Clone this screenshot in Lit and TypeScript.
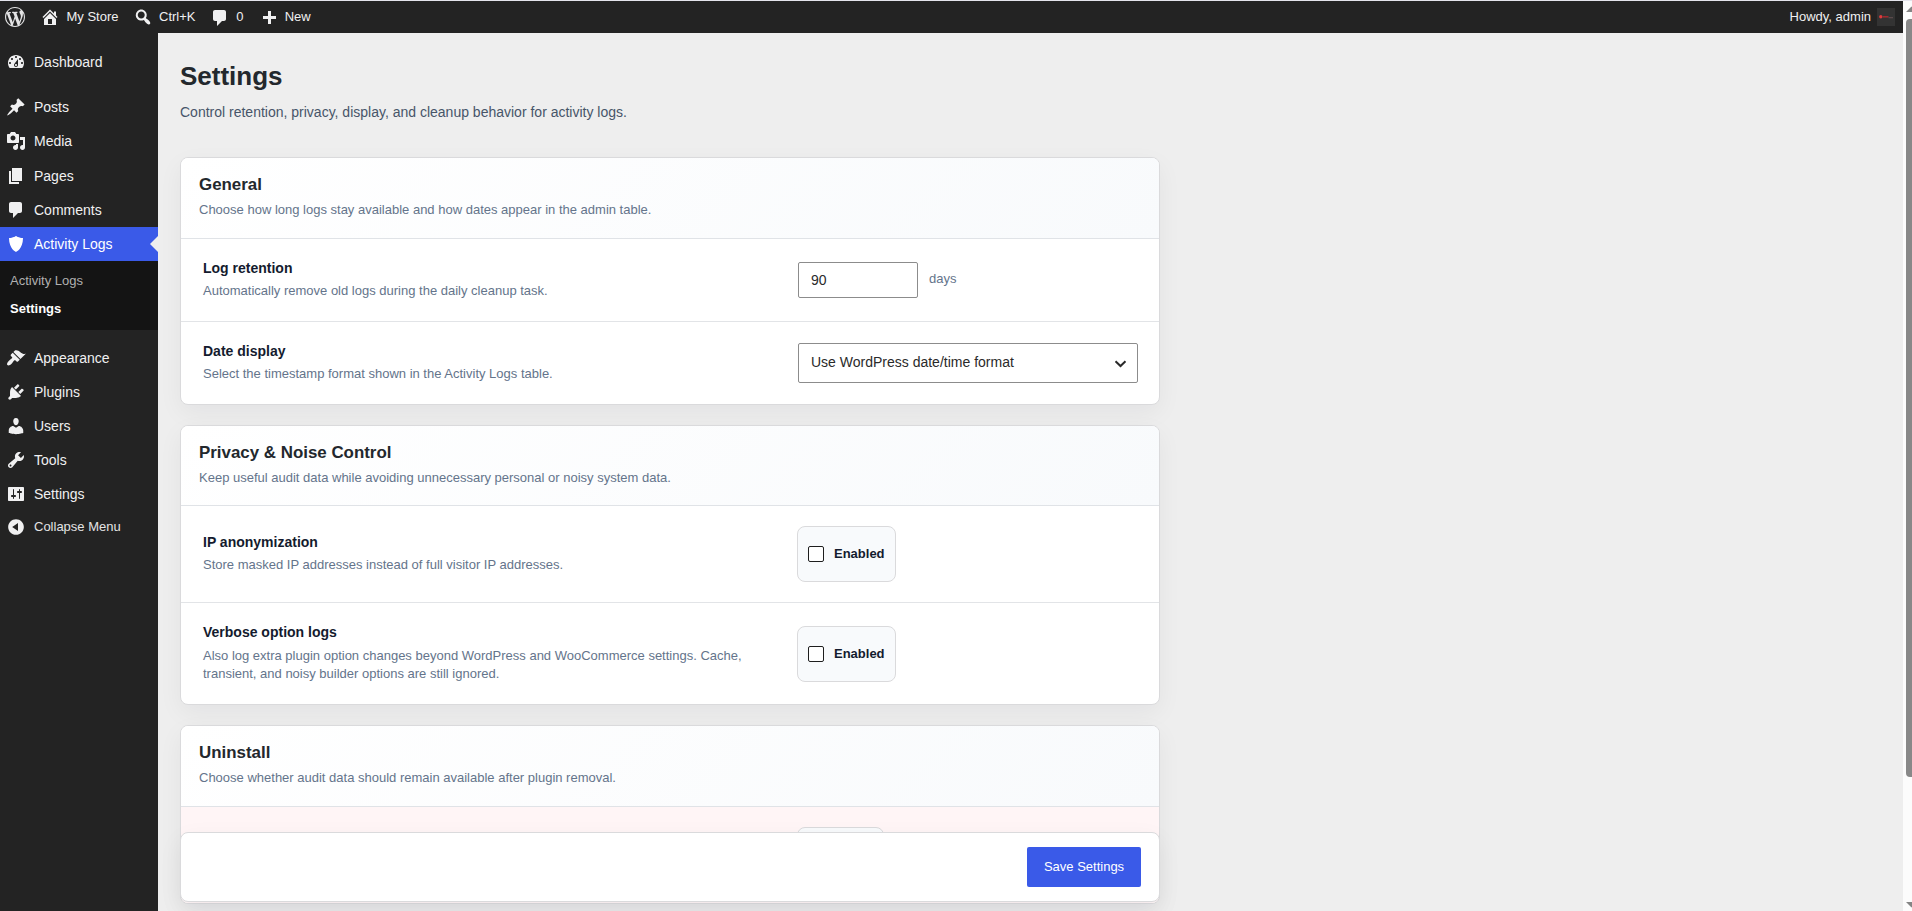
import { LitElement, html, svg, css, nothing } from "lit";
import { customElement, property } from "lit/decorators.js";

const ICONS: Record<string, string> = {
  wordpress:
    "M20 10c0-5.51-4.49-10-10-10C4.48 0 0 4.49 0 10c0 5.52 4.48 10 10 10 5.51 0 10-4.48 10-10zM7.78 15.37L4.37 6.22c.55-.02 1.17-.08 1.17-.08.5-.06.44-1.13-.06-1.11 0 0-1.45.11-2.37.11-.18 0-.37 0-.58-.01C4.12 2.69 6.87 1.11 10 1.11c2.33 0 4.45.87 6.05 2.34-.68-.11-1.65.39-1.65 1.58 0 .74.45 1.36.9 2.1.35.61.55 1.36.55 2.46 0 1.49-1.4 5-1.4 5l-3.03-8.37c.54-.02.82-.17.82-.17.5-.05.44-1.25-.06-1.22 0 0-1.44.12-2.38.12-.87 0-2.33-.12-2.33-.12-.5-.03-.56 1.2-.06 1.22l.92.08 1.26 3.41zM17.41 10c.24-.64.74-1.87.43-4.25.7 1.29 1.05 2.71 1.05 4.25 0 3.29-1.73 6.24-4.4 7.78.97-2.59 1.94-5.2 2.92-7.78zM6.1 18.09C3.12 16.65 1.11 13.53 1.11 10c0-1.3.23-2.48.72-3.59C3.25 10.3 4.67 14.2 6.1 18.09zm4.03-6.63l2.58 6.98c-.86.29-1.76.45-2.71.45-.79 0-1.57-.11-2.29-.33.81-2.38 1.62-4.74 2.42-7.1z",
  home: "M16 8.5l1.53 1.53-1.06 1.06L10 4.6l-6.47 6.49-1.06-1.06L10 2.5l4 4v-2h2v4zm-6-2.46l6 5.99V18H4v-5.97zM12 17v-5H8v5h4z",
  search:
    "M12.14 4.18c1.87 1.87 2.11 4.75.72 6.89.12.1.22.21.36.31.2.16.47.36.81.59.34.24.56.39.66.47.42.31.73.57.94.78.32.32.6.65.84 1 .25.35.44.69.59 1.04.14.35.21.68.18 1-.02.32-.14.59-.36.81s-.49.34-.81.36c-.31.02-.65-.04-.99-.19-.35-.14-.7-.34-1.04-.59-.35-.24-.68-.52-1-.84-.21-.21-.47-.52-.77-.93-.1-.13-.25-.35-.47-.66-.22-.32-.4-.57-.56-.78-.16-.2-.29-.35-.44-.5-2.07 1.09-4.69.76-6.44-.98-2.14-2.15-2.14-5.64 0-7.78 2.15-2.15 5.63-2.15 7.78 0zm-1.41 6.36c1.36-1.37 1.36-3.58 0-4.95-1.37-1.37-3.59-1.37-4.95 0-1.37 1.37-1.37 3.58 0 4.95 1.36 1.37 3.58 1.37 4.95 0z",
  comments:
    "M5 2h9c1.1 0 2 .9 2 2v7c0 1.1-.9 2-2 2h-2l-5 5v-5H5c-1.1 0-2-.9-2-2V4c0-1.1.9-2 2-2z",
  plus: "M17 7v3h-5v5H9v-5H4V7h5V2h3v5h5z",
  dashboard:
    "M3.76 16h12.48c1.1-1.37 1.76-3.11 1.76-5 0-4.42-3.58-8-8-8s-8 3.58-8 8c0 1.89.66 3.63 1.76 5zM10 4c.55 0 1 .45 1 1s-.45 1-1 1-1-.45-1-1 .45-1 1-1zM6 6c.55 0 1 .45 1 1s-.45 1-1 1-1-.45-1-1 .45-1 1-1zm8 0c.55 0 1 .45 1 1s-.45 1-1 1-1-.45-1-1 .45-1 1-1zm-5.37 5.55L12 7v6c0 1.1-.9 2-2 2s-2-.9-2-2c0-.57.24-1.08.63-1.45zM4 10c.55 0 1 .45 1 1s-.45 1-1 1-1-.45-1-1 .45-1 1-1zm12 0c.55 0 1 .45 1 1s-.45 1-1 1-1-.45-1-1 .45-1 1-1zm-5 3c0-.55-.45-1-1-1s-1 .45-1 1 .45 1 1 1 1-.45 1-1z",
  posts:
    "M10.44 3.02l1.82-1.82 6.36 6.35-1.83 1.82c-1.05-.68-2.48-.57-3.41.36l-.75.75c-.92.93-1.04 2.35-.35 3.41l-1.83 1.82-2.41-2.41-2.8 2.79c-.42.42-3.38 2.71-3.8 2.29s1.86-3.39 2.28-3.81l2.79-2.79L4.1 9.36l1.83-1.82c1.05.69 2.48.57 3.4-.36l.75-.75c.93-.92 1.05-2.35.36-3.41z",
  media:
    "M13 11V4c0-.55-.45-1-1-1h-1.67L9 1H5L3.67 3H2c-.55 0-1 .45-1 1v7c0 .55.45 1 1 1h10c.55 0 1-.45 1-1zM7 4.5c1.38 0 2.5 1.12 2.5 2.5S8.38 9.5 7 9.5 4.5 8.38 4.5 7 5.62 4.5 7 4.5zM14 6h5v10.5c0 1.38-1.12 2.5-2.5 2.5S14 17.88 14 16.5s1.12-2.5 2.5-2.5c.17 0 .34.02.5.05V9h-3V6zm-4 8.05V13h2v3.5c0 1.38-1.12 2.5-2.5 2.5S7 17.88 7 16.5 8.12 14 9.5 14c.17 0 .34.02.5.05z",
  pages: "M6 15V2h10v13H6zm-1 1h8v2H3V5h2v11z",
  shield: "M10 2s3 2 7 2c0 11-7 14-7 14S3 15 3 4c4 0 7-2 7-2z",
  appearance:
    "M14.48 11.06L7.41 3.99l1.5-1.5c.5-.56 2.3-.47 3.51.32 1.21.8 1.43 1.28 2.91 2.1 1.18.64 2.45 1.26 4.45.85zm-.71.71L6.7 4.7 4.93 6.47c-.39.39-.39 1.02 0 1.41l1.06 1.06c.39.39.39 1.03 0 1.42-.6.6-1.43 1.11-2.21 1.69-.35.26-.7.53-1.01.84C1.43 14.23.4 16.08 1.4 17.07c.99 1 2.84-.03 4.18-1.36.31-.31.58-.66.85-1.02.57-.78 1.08-1.61 1.69-2.21.39-.39 1.02-.39 1.41 0l1.06 1.06c.39.39 1.02.39 1.41 0z",
  plugins:
    "M13.11 4.36L9.87 7.6 8 5.73l3.24-3.24c.35-.34 1.05-.2 1.56.32.52.51.66 1.21.31 1.55zm-8 1.77l.91-1.12 9.01 9.01-1.19.84c-.71.71-2.63 1.16-3.82 1.16H6.14L4.9 17.26c-.59.59-1.54.59-2.12 0-.59-.58-.59-1.53 0-2.12l1.24-1.24v-3.88c0-1.13.4-3.19 1.09-3.89zm7.26 3.97l3.24-3.24c.34-.35 1.04-.21 1.55.31.52.51.66 1.21.31 1.55l-3.24 3.25z",
  users:
    "M10 9.25c-2.27 0-2.73-3.44-2.73-3.44C7 4.02 7.82 2 9.97 2c2.16 0 2.98 2.02 2.71 3.81 0 0-.41 3.44-2.68 3.44zm0 2.57L12.72 10c2.39 0 4.52 2.33 4.52 4.53v2.49s-3.65 1.13-7.24 1.13c-3.65 0-7.24-1.13-7.24-1.13v-2.49c0-2.25 1.94-4.48 4.47-4.48z",
  tools:
    "M16.68 9.77c-1.34 1.34-3.3 1.67-4.95.99l-5.41 6.52c-.99.99-2.59.99-3.58 0s-.99-2.59 0-3.57l6.52-5.42c-.68-1.65-.35-3.61.99-4.95 1.28-1.28 3.12-1.62 4.72-1.06l-2.89 2.89 2.82 2.82 2.86-2.87c.53 1.58.18 3.39-1.08 4.65zM3.81 16.21c.4.39 1.04.39 1.43 0 .4-.4.4-1.04 0-1.43-.39-.4-1.03-.4-1.43 0-.39.39-.39 1.03 0 1.43z",
  settings:
    "M18 16V4c0-.55-.45-1-1-1H3c-.55 0-1 .45-1 1v12c0 .55.45 1 1 1h14c.55 0 1-.45 1-1zM8 11h1c.55 0 1 .45 1 1s-.45 1-1 1H8v1.5c0 .28-.22.5-.5.5s-.5-.22-.5-.5V13H6c-.55 0-1-.45-1-1s.45-1 1-1h1V5.5c0-.28.22-.5.5-.5s.5.22.5.5V11zm5-2h-1c-.55 0-1-.45-1-1s.45-1 1-1h1V5.5c0-.28.22-.5.5-.5s.5.22.5.5V7h1c.55 0 1 .45 1 1s-.45 1-1 1h-1v5.5c0 .28-.22.5-.5.5s-.5-.22-.5-.5V9z",
  collapse:
    "M10 2.16c4.33 0 7.84 3.51 7.84 7.84s-3.51 7.84-7.84 7.84S2.16 14.33 2.16 10 5.71 2.16 10 2.16zm2 11.72V6.12L6.18 9.97z",
};

@customElement("wp-icon")
class WpIcon extends LitElement {
  @property() name = "";
  static styles = css`
    :host {
      display: block;
      flex: none;
      width: 20px;
      height: 20px;
    }
    .glyph {
      display: block;
      width: 20px;
      height: 20px;
      fill: currentColor;
    }
  `;
  render() {
    return html`<svg class="glyph" viewBox="0 0 20 20">${svg`<path d=${ICONS[this.name]} />`}</svg>`;
  }
}

@customElement("admin-bar")
class AdminBar extends LitElement {
  static styles = css`
    :host {
      display: block;
    }
    .bar {
      display: grid;
      grid-template-columns: 40px 93px 77.3px 48.4px 1fr auto;
      height: 32px;
      background: #232323;
      color: #f0f0f1;
      font-size: 13px;
      line-height: 32px;
    }
    .item {
      display: flex;
      align-items: flex-start;
      gap: 6px;
    }
    .item.site {
      gap: 6.5px;
    }
    .item wp-icon {
      margin-top: 7px;
    }
    .item.raised wp-icon {
      margin-top: 6px;
    }
    .item.logo {
      padding-left: 5px;
    }
    .item.logo wp-icon {
      margin-top: 6px;
      color: #e4e4e5;
    }
    .item.new wp-icon {
      margin-top: 8px;
    }
    .account {
      display: flex;
      align-items: center;
      gap: 6px;
      padding-right: 8px;
    }
    .avatar {
      display: block;
      width: 18px;
      height: 18px;
      margin-bottom: 1px;
    }
  `;
  render() {
    return html`<header class="bar">
      <div class="item logo"><wp-icon name="wordpress"></wp-icon></div>
      <div class="item raised site"><wp-icon name="home"></wp-icon><span>My Store</span></div>
      <div class="item raised"><wp-icon name="search"></wp-icon><span>Ctrl+K</span></div>
      <div class="item"><wp-icon name="comments"></wp-icon><span>0</span></div>
      <div class="item new"><wp-icon name="plus"></wp-icon><span>New</span></div>
      <div class="account">
        <span>Howdy, admin</span>
        <svg class="avatar" viewBox="0 0 18 18">
          <rect width="18" height="18" fill="#333" />
          <circle cx="3.8" cy="8.8" r="1.7" fill="#e0393c" />
          <rect x="6" y="8" width="5.5" height="1.6" fill="#9c2b2f" />
          <rect x="11.5" y="9" width="4.5" height="1.3" fill="#5a4a4b" />
        </svg>
      </div>
    </header>`;
  }
}

const MENU = [
  [["dashboard", "Dashboard"]],
  [
    ["posts", "Posts"],
    ["media", "Media"],
    ["pages", "Pages"],
    ["comments", "Comments"],
    ["shield", "Activity Logs"],
  ],
  [
    ["appearance", "Appearance"],
    ["plugins", "Plugins"],
    ["users", "Users"],
    ["tools", "Tools"],
    ["settings", "Settings"],
  ],
];

@customElement("admin-menu")
class AdminMenu extends LitElement {
  static styles = css`
    :host {
      display: block;
      width: 158px;
      background: #232323;
      color: #f0f0f1;
      font-size: 14px;
    }
    .menu {
      padding-top: 12px;
    }
    .group {
      margin-bottom: 11px;
    }
    .group.middle {
      margin-bottom: 10.6px;
    }
    .group.last {
      margin-bottom: 0;
    }
    .group.last .item {
      height: 34.05px;
    }
    .item {
      display: flex;
      align-items: center;
      gap: 8px;
      height: 34.2px;
      padding-left: 6px;
      line-height: 18.2px;
    }
    .item.current {
      position: relative;
      background: #3a5ae8;
      color: #fff;
    }
    .item.current::after {
      content: "";
      position: absolute;
      right: 0;
      top: 9px;
      border: 8px solid transparent;
      border-left-width: 0;
      border-right-color: #eee;
    }
    .submenu {
      box-sizing: border-box;
      height: 69px;
      padding: 5.5px 0 0 10px;
      background: #141414;
      font-size: 13px;
      color: #b0b0b0;
    }
    .sub {
      line-height: 28.2px;
    }
    .sub.active {
      color: #fff;
      font-weight: 600;
    }
    .item.collapse {
      height: 33px;
      font-size: 13px;
      color: #e4e4e5;
    }
    .collapse span {
      margin-bottom: 1px;
    }
    .collapse wp-icon {
      color: #f0f0f1;
    }
  `;
  render() {
    return html`<nav class="menu">
      ${MENU.map(
        (group, i) => html`<div class="group ${["first", "middle", "last"][i]}">
          ${group.map(
            ([icon, label]) => html`<div class="item ${icon === "shield" ? "current" : ""}">
                <wp-icon name=${icon}></wp-icon><span>${label}</span>
              </div>
              ${icon === "shield"
                ? html`<div class="submenu">
                    <div class="sub">Activity Logs</div>
                    <div class="sub active">Settings</div>
                  </div>`
                : nothing}`
          )}
        </div>`
      )}
      <div class="item collapse"><wp-icon name="collapse"></wp-icon><span>Collapse Menu</span></div>
    </nav>`;
  }
}

@customElement("settings-page")
class SettingsPage extends LitElement {
  static styles = css`
    :host {
      display: block;
      padding: 28px 0 0 22px;
    }
    .title {
      margin: 0;
      font-size: 26px;
      line-height: 30px;
      font-weight: 700;
      color: #23282d;
    }
    .intro {
      margin: 11px 0 35px;
      font-size: 14px;
      line-height: 20px;
      color: #475569;
    }
    .card {
      box-sizing: border-box;
      width: 980px;
      margin-bottom: 20px;
      border: 1px solid #dadadc;
      border-radius: 8px;
      background: #fff;
      box-shadow: 0 8px 24px rgba(15, 23, 42, 0.05);
      overflow: hidden;
    }
    .head {
      box-sizing: border-box;
      height: 81px;
      padding: 16px 18px 0;
      border-bottom: 1px solid #e0e3e7;
      background: linear-gradient(135deg, #fff 0%, #f8fafc 100%);
    }
    .privacy .head {
      height: 80px;
    }
    .head-title {
      margin: 0;
      font-size: 16.9px;
      line-height: 21px;
      font-weight: 700;
      color: #23282d;
    }
    .head-text {
      margin: 5px 0 0;
      font-size: 13px;
      line-height: 19px;
      color: #64748b;
    }
    .row {
      box-sizing: border-box;
      display: grid;
      grid-template-columns: 1fr 340px;
      column-gap: 24px;
      align-items: center;
      height: 82px;
      padding: 0 21px 0 22px;
    }
    .row.ruled {
      height: 83px;
      border-bottom: 1px solid #e2e4e7;
    }
    .row.ip {
      height: 97px;
    }
    .row.verbose {
      height: 101px;
      padding-top: 1px;
    }
    .row.danger {
      height: 96px;
      background: #fff5f6;
    }
    .copy {
      padding-bottom: 2px;
    }
    .label {
      font-size: 14px;
      line-height: 20px;
      font-weight: 700;
      color: #141b2e;
    }
    .hint {
      margin-top: 4px;
      font-size: 13px;
      line-height: 18px;
      color: #64748b;
    }
    .verbose .copy {
      padding-bottom: 3px;
    }
    .verbose .hint {
      margin-top: 5px;
    }
    .control {
      display: flex;
      align-items: center;
    }
    .number {
      box-sizing: border-box;
      width: 120px;
      height: 36px;
      padding: 0 12px;
      border: 1px solid #8c8c8c;
      border-radius: 2px;
      font-size: 14px;
      line-height: 34px;
      color: #2a2a2a;
    }
    .unit {
      margin: 0 0 3px 11px;
      font-size: 13px;
      line-height: 18px;
      color: #64748b;
    }
    .select {
      box-sizing: border-box;
      display: flex;
      align-items: center;
      justify-content: space-between;
      width: 340px;
      height: 40px;
      padding: 0 10px 0 12px;
      border: 1px solid #8c8c8c;
      border-radius: 2px;
      font-size: 14px;
      color: #2a2a2a;
    }
    .select span {
      margin-bottom: 2px;
    }
    .chevron {
      display: block;
      width: 13px;
      height: 8px;
      margin-top: 2px;
    }
    .toggle {
      box-sizing: border-box;
      display: flex;
      align-items: center;
      gap: 10px;
      width: 99px;
      height: 56px;
      margin-left: -1px;
      padding-left: 10px;
      border: 1px solid #dadadc;
      border-radius: 8px;
      background: #f8fafc;
      font-size: 13px;
      font-weight: 700;
      color: #141b2e;
    }
    .toggle.narrow {
      width: 87px;
    }
    .toggle-text {
      margin-bottom: 2px;
    }
    .box {
      box-sizing: border-box;
      width: 16px;
      height: 16px;
      border: 1px solid #1e1e1e;
      border-radius: 2px;
      background: #fff;
    }
    .actions {
      position: relative;
      box-sizing: border-box;
      display: flex;
      align-items: center;
      justify-content: flex-end;
      width: 980px;
      height: 70px;
      margin-top: -92px;
      padding-right: 18px;
      border: 1px solid #dadadc;
      border-radius: 8px;
      background: #fff;
      box-shadow: 0 8px 24px rgba(15, 23, 42, 0.06);
    }
    .save {
      width: 114px;
      height: 40px;
      padding: 0;
      border: 0;
      border-radius: 2px;
      background: #3a5ae8;
      color: #fff;
      font-family: inherit;
      font-size: 13px;
      line-height: 40px;
    }
  `;
  private head(title: string, text: string) {
    return html`<div class="head">
      <h2 class="head-title">${title}</h2>
      <p class="head-text">${text}</p>
    </div>`;
  }
  private copy(label: string, hint: string) {
    return html`<div class="copy">
      <div class="label">${label}</div>
      <div class="hint">${hint}</div>
    </div>`;
  }
  private toggle() {
    return html`<div class="control">
      <label class="toggle"><span class="box"></span><span class="toggle-text">Enabled</span></label>
    </div>`;
  }
  render() {
    return html`
      <h1 class="title">Settings</h1>
      <p class="intro">Control retention, privacy, display, and cleanup behavior for activity logs.</p>

      <section class="card">
        ${this.head("General", "Choose how long logs stay available and how dates appear in the admin table.")}
        <div class="row ruled">
          ${this.copy("Log retention", "Automatically remove old logs during the daily cleanup task.")}
          <div class="control">
            <div class="number">90</div>
            <span class="unit">days</span>
          </div>
        </div>
        <div class="row">
          ${this.copy("Date display", "Select the timestamp format shown in the Activity Logs table.")}
          <div class="control">
            <div class="select">
              <span>Use WordPress date/time format</span>
              <svg class="chevron" viewBox="0 0 13 8">
                <path d="M1.5 1.2L6.5 6L11.5 1.2" fill="none" stroke="#2a2a2a" stroke-width="2" />
              </svg>
            </div>
          </div>
        </div>
      </section>

      <section class="card privacy">
        ${this.head("Privacy & Noise Control", "Keep useful audit data while avoiding unnecessary personal or noisy system data.")}
        <div class="row ruled ip">
          ${this.copy("IP anonymization", "Store masked IP addresses instead of full visitor IP addresses.")}
          ${this.toggle()}
        </div>
        <div class="row verbose">
          ${this.copy(
            "Verbose option logs",
            "Also log extra plugin option changes beyond WordPress and WooCommerce settings. Cache, transient, and noisy builder options are still ignored."
          )}
          ${this.toggle()}
        </div>
      </section>

      <section class="card">
        ${this.head("Uninstall", "Choose whether audit data should remain available after plugin removal.")}
        <div class="row danger">
          <div class="copy"></div>
          <div class="control"><div class="toggle narrow"></div></div>
        </div>
      </section>

      <div class="actions"><button class="save">Save Settings</button></div>
    `;
  }
}

@customElement("app-root")
class AppRoot extends LitElement {
  static styles = css`
    :host {
      box-sizing: border-box;
      display: grid;
      grid-template-columns: minmax(0, 1fr) 9px;
      width: 100%;
      height: 911px;
      padding-top: 1px;
      overflow: hidden;
      background: #e4e4ec;
      font-family: "Liberation Sans", Arial, sans-serif;
    }
    .frame {
      display: grid;
      grid-template-rows: 32px minmax(0, 1fr);
      height: 910px;
      background: #eee;
    }
    .body {
      display: grid;
      grid-template-columns: 158px minmax(0, 1fr);
      min-height: 0;
    }
    .main {
      overflow: hidden;
    }
    .scroll {
      display: block;
      width: 9px;
      height: 910px;
      background: #fcfcfc;
    }
  `;
  render() {
    return html`
      <div class="frame">
        <admin-bar></admin-bar>
        <div class="body">
          <admin-menu></admin-menu>
          <div class="main"><settings-page></settings-page></div>
        </div>
      </div>
      <svg class="scroll" viewBox="0 0 9 910">
        <path d="M3 11L8.5 5.5L14 11Z" fill="#858585" />
        <rect x="3" y="18" width="12" height="758" rx="4" fill="#888" />
        <path d="M3 901L8.5 906.5L14 901Z" fill="#858585" />
      </svg>
    `;
  }
}
